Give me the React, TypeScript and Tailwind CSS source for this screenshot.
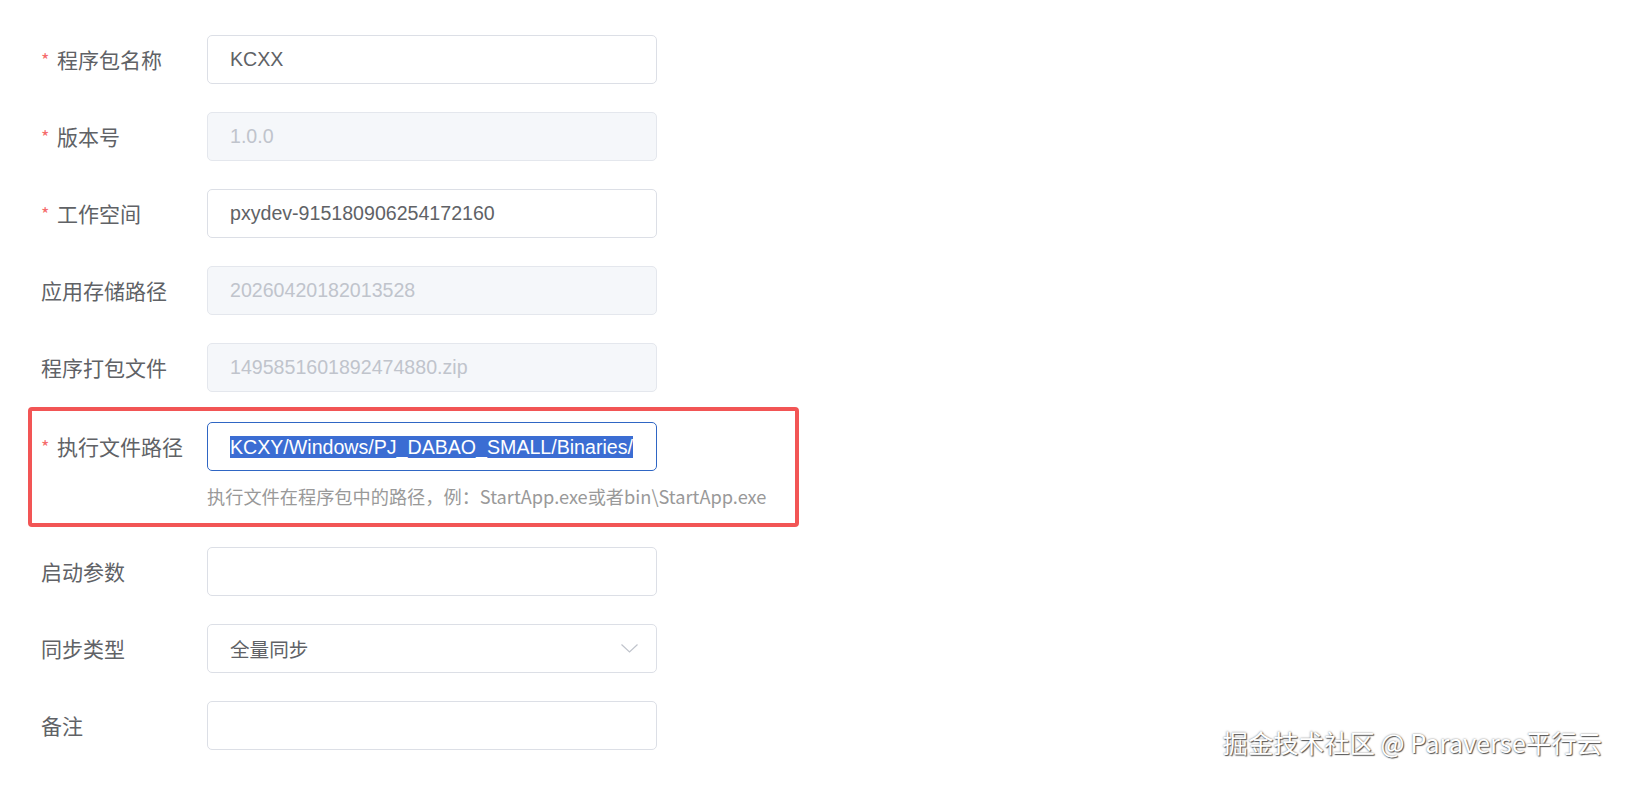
import React from 'react';

interface FieldProps {
  label: string;
  required?: boolean;
  children: React.ReactNode;
}

const Field: React.FC<FieldProps> = ({ label, required, children }) => (
  <div className="flex items-center">
    <div className="w-[166px] shrink-0 flex items-center text-[21px] text-[#606266] font-['Noto_Sans_CJK_SC',sans-serif]">
      {required && <span className="text-[#f56c6c] w-[16px] text-[18px]">*</span>}
      <span>{label}</span>
    </div>
    {children}
  </div>
);

const inputBase =
  "w-[450px] h-[49px] rounded-[5px] border px-[22px] flex items-center text-[19.6px] font-['Liberation_Sans','Noto_Sans_CJK_SC',sans-serif] overflow-hidden whitespace-nowrap";

const TextBox: React.FC<{ value?: string; disabled?: boolean }> = ({ value, disabled }) => (
  <div
    className={`${inputBase} ${
      disabled ? 'bg-[#f5f7fa] border-[#e4e7ed] text-[#c0c4cc]' : 'bg-white border-[#dcdfe6] text-[#606266]'
    }`}
  >
    {value}
  </div>
);

export default function App() {
  return (
    <div className="relative w-[1626px] h-[786px] bg-white overflow-hidden">
      <div className="pt-[35px] pl-[41px] flex flex-col">
        <div className="flex flex-col gap-[28px]">
          <Field label="程序包名称" required>
            <TextBox value="KCXX" />
          </Field>
          <Field label="版本号" required>
            <TextBox value="1.0.0" disabled />
          </Field>
          <Field label="工作空间" required>
            <TextBox value="pxydev-915180906254172160" />
          </Field>
          <Field label="应用存储路径">
            <TextBox value="20260420182013528" disabled />
          </Field>
          <Field label="程序打包文件">
            <TextBox value="1495851601892474880.zip" disabled />
          </Field>
        </div>

        {/* highlighted row */}
        <div className="mt-[15px] -ml-[13px] w-[771px] border-4 border-[#f25555] rounded-[4px] pl-[9px] pt-[11px] pb-[15px]">
          <Field label="执行文件路径" required>
            <div className={`${inputBase} bg-white border-[#2f66c4] text-white`}>
              <span className="bg-[#3b6dd3] leading-[22px] inline-block">
                KCXY/Windows/PJ_DABAO_SMALL/Binaries/
              </span>
            </div>
          </Field>
          <div className="ml-[166px] mt-[13px] leading-[24px] text-[18.2px] text-[#999999] font-['Noto_Sans_CJK_SC',sans-serif] whitespace-nowrap">
            执行文件在程序包中的路径，例：StartApp.exe或者bin\StartApp.exe
          </div>
        </div>

        <div className="mt-[20px] flex flex-col gap-[28px]">
          <Field label="启动参数">
            <TextBox />
          </Field>
          <Field label="同步类型">
            <div className={`${inputBase} bg-white border-[#dcdfe6] text-[#606266] justify-between font-['Noto_Sans_CJK_SC',sans-serif]`}>
              <span>全量同步</span>
              <svg width="17" height="9" viewBox="0 0 17 9" className="mr-[-4px]">
                <path d="M0.5 0.5 L8.5 8 L16.5 0.5" fill="none" stroke="#c0c4cc" strokeWidth="1.2" />
              </svg>
            </div>
          </Field>
          <Field label="备注">
            <TextBox />
          </Field>
        </div>
      </div>

      <div className="absolute right-[24px] bottom-[25px] text-[25.4px] text-white font-['Noto_Sans_CJK_SC',sans-serif] [text-shadow:1px_1px_1px_#555,0_0_2px_#777]">
        掘金技术社区 @ Paraverse平行云
      </div>
    </div>
  );
}
